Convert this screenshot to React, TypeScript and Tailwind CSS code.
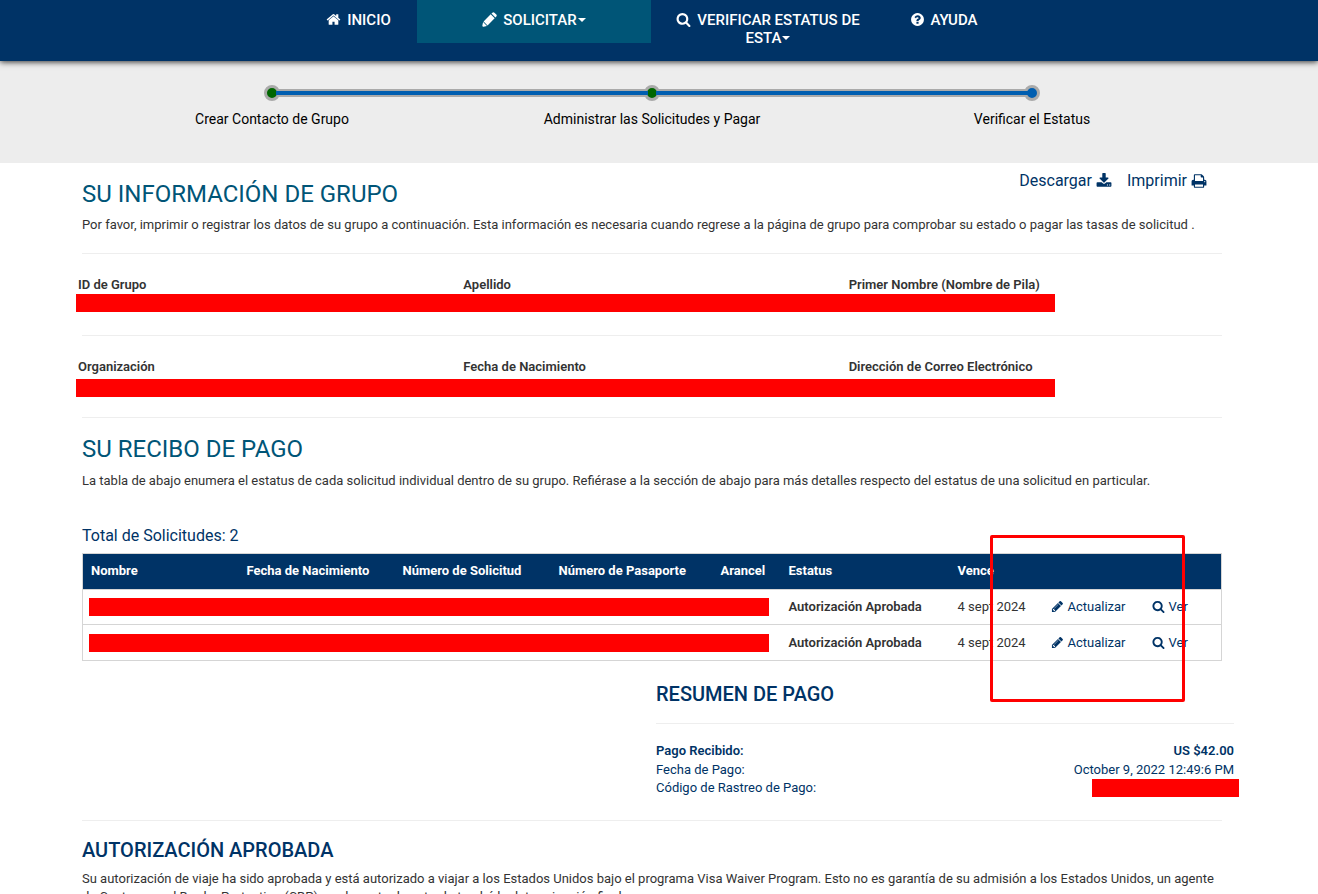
import type { ReactNode } from "react";

const ICONS = {
  home: "M1472 992v480q0 26-19 45t-45 19h-384v-384h-256v384h-384q-26 0-45-19t-19-45v-480q0-1 .5-3t.5-3l575-474 575 474q1 2 1 6zm223-69l-62 74q-8 9-21 11h-3q-13 0-21-7l-692-577-692 577q-12 8-24 7-13-2-21-11l-62-74q-8-10-7-23.5t11-21.5l719-599q32-26 76-26t76 26l244 204v-195q0-14 9-23t23-9h192q14 0 23 9t9 23v408l219 182q10 8 11 21.5t-7 23.5z",
  pencil:
    "M491 1536l91-91-235-235-91 91v107h128v128h107zm523-928q0-22-22-22-10 0-17 7l-542 542q-7 7-7 17 0 22 22 22 10 0 17-7l542-542q7-7 7-17zm-54-192l416 416-832 832h-416v-416zm683 96q0 53-37 90l-166 166-416-416 166-165q36-38 90-38 53 0 91 38l235 234q37 39 37 91z",
  pencilSolid:
    "M1130 190l110-110q50-50 120-50t120 50l232 232q50 50 50 120t-50 120l-110 110zM1040 280l472 472-850 850-472-472zM130 1200l462 462-400 100q-60 10-110-40t-40-110z",
  search:
    "M1216 832q0-185-131.5-316.5t-316.5-131.5-316.5 131.5-131.5 316.5 131.5 316.5 316.5 131.5 316.5-131.5 131.5-316.5zm512 832q0 52-38 90t-90 38q-54 0-90-38l-343-342q-179 124-399 124-143 0-273.5-55.5t-225-150-150-225-55.5-273.5 55.5-273.5 150-225 225-150 273.5-55.5 273.5 55.5 225 150 150 225 55.5 273.5q0 220-124 399l343 343q37 37 37 90z",
  help: "M1024 1376v-192q0-14-9-23t-23-9h-192q-14 0-23 9t-9 23v192q0 14 9 23t23 9h192q14 0 23-9t9-23zm256-672q0-88-55.5-163t-138.5-116-170-41q-243 0-371 213-15 24 8 42l132 100q7 6 19 6 16 0 25-12 53-68 86-92 34-24 86-24 48 0 85.5 26t37.5 59q0 38-20 61t-68 45q-63 28-115.5 86.5t-52.5 125.5v36q0 14 9 23t23 9h192q14 0 23-9t9-23q0-19 21.5-49.5t54.5-49.5q32-18 49-28.5t46-35 44.5-48 28-60.5 12.5-81zm384 192q0 209-103 385.5t-279.5 279.5-385.5 103-385.5-103-279.5-279.5-103-385.5 103-385.5 279.5-279.5 385.5-103 385.5 103 279.5 279.5 103 385.5z",
  download:
    "M1344 1344q0-26-19-45t-45-19-45 19-19 45 19 45 45 19 45-19 19-45zm256 0q0-26-19-45t-45-19-45 19-19 45 19 45 45 19 45-19 19-45zm128-224v320q0 40-28 68t-68 28h-1472q-40 0-68-28t-28-68v-320q0-40 28-68t68-28h465l135 136q58 56 136 56t136-56l136-136h464q40 0 68 28t28 68zm-325-569q17 41-14 70l-448 448q-18 19-45 19t-45-19l-448-448q-31-29-14-70 17-39 59-39h256v-448q0-26 19-45t45-19h256q26 0 45 19t19 45v448h256q42 0 59 39z",
  print:
    "M448 1536h896v-256h-896v256zm0-640h896v-384h-160q-40 0-68-28t-28-68v-160h-640v640zm1152 64q0-26-19-45t-45-19-45 19-19 45 19 45 45 19 45-19 19-45zm128 0v416q0 13-9.5 22.5t-22.5 9.5h-224v160q0 40-28 68t-68 28h-960q-40 0-68-28t-28-68v-160h-224q-13 0-22.5-9.5t-9.5-22.5v-416q0-79 56.5-135.5t135.5-56.5h64v-544q0-40 28-68t68-28h672q40 0 88 20t76 48l152 152q28 28 48 76t20 88v256h64q79 0 135.5 56.5t56.5 135.5z",
};

function Icon({ name, className }: { name: keyof typeof ICONS; className: string }) {
  return (
    <svg viewBox="0 0 1792 1792" fill="currentColor" aria-hidden="true" className={className}>
      <path d={ICONS[name]} />
    </svg>
  );
}

function Caret() {
  return (
    <svg viewBox="0 0 8 4" fill="currentColor" aria-hidden="true" className="ml-px inline h-1 w-2 align-[3px]">
      <path d="M0 0h8L4 4z" />
    </svg>
  );
}

function NavItem({ icon, className, children }: { icon: keyof typeof ICONS; className: string; children: ReactNode }) {
  return (
    <a href="#" className={`px-[15px] pt-[11px] pb-[14px] text-center ${className}`}>
      <Icon name={icon} className="mr-1.5 inline size-[15px] align-[-2px]" />
      {children}
    </a>
  );
}

function Header() {
  return (
    <header className="relative bg-[#003366] pr-4 text-white shadow-[0_1px_6px_rgba(0,0,0,0.8)]">
      <nav className="mx-auto flex w-full max-w-[702px] items-start text-[15px] leading-[18px] font-medium">
        <NavItem icon="home" className="w-1/6 whitespace-nowrap">INICIO</NavItem>
        <NavItem icon="pencilSolid" className="w-1/3 bg-[#005577]">
          SOLICITAR
          <Caret />
        </NavItem>
        <NavItem icon="search" className="w-1/3">
          VERIFICAR ESTATUS DE ESTA
          <Caret />
        </NavItem>
        <NavItem icon="help" className="w-1/6 whitespace-nowrap">AYUDA</NavItem>
      </nav>
    </header>
  );
}

const STEPS = [
  { label: "Crear Contacto de Grupo", dot: "bg-[#006600]", before: false, after: true },
  { label: "Administrar las Solicitudes y Pagar", dot: "bg-[#006600]", before: true, after: true },
  { label: "Verificar el Estatus", dot: "bg-[#005eb0]", before: true, after: false },
];

function Track({ shown }: { shown: boolean }) {
  return (
    <span className={`relative z-10 h-2 flex-1 py-0.5 ${shown ? "bg-[#aaaaaa]" : ""}`}>
      {shown && <span className="-mx-0.5 block h-1 bg-[#005eb0]" />}
    </span>
  );
}

function Stepper() {
  return (
    <section className="bg-[#ededed] pr-[14px]">
      <ol className="mx-auto grid max-w-[1140px] grid-cols-3 pt-6 pb-[35px]">
        {STEPS.map((step) => (
          <li key={step.label} className="text-center text-[14px] leading-[18px] text-black">
            <div className="mb-[9px] flex items-center">
              <Track shown={step.before} />
              <span className={`-mx-0.5 size-4 rounded-full border-3 border-[#aaaaaa] ${step.dot}`} />
              <Track shown={step.after} />
            </div>
            {step.label}
          </li>
        ))}
      </ol>
    </section>
  );
}

function Fields({ labels, barClass }: { labels: string[]; barClass: string }) {
  return (
    <div className="-mr-3 -ml-1 pt-[22px]">
      <div className="grid grid-cols-3 font-semibold">
        {labels.map((label) => (
          <div key={label}>{label}</div>
        ))}
      </div>
      <div className={`-ml-0.5 h-[18px] w-[979px] max-w-full bg-[#ff0000] ${barClass}`} />
    </div>
  );
}

function Applications() {
  return (
    <div className="relative">
      <table className="w-full table-fixed border-collapse border border-[#d5d5d5] text-left">
        <colgroup>
          <col className="w-[156px]" />
          <col className="w-[156px]" />
          <col className="w-[156px]" />
          <col className="w-[162px]" />
          <col className="w-[68px]" />
          <col className="w-[169px]" />
          <col className="w-[93px]" />
          <col className="w-[101px]" />
          <col />
        </colgroup>
        <thead>
          <tr className="h-[36px] bg-[#003366] text-white">
            {["Nombre", "Fecha de Nacimiento", "Número de Solicitud", "Número de Pasaporte", "Arancel", "Estatus", "Vence", "", ""].map(
              (title, i) => (
                <th key={i} className="px-2 pb-0.5 font-bold whitespace-nowrap">
                  {title}
                </th>
              ),
            )}
          </tr>
        </thead>
        <tbody>
          {[1, 2].map((row) => (
            <tr key={row} className="h-[35px] border-t border-[#d5d5d5] last:h-[36px]">
              <td colSpan={5} className="pr-3 pl-1.5">
                <div className="h-[18px] bg-[#ff0000]" />
              </td>
              <td className="px-2 font-semibold whitespace-nowrap">Autorización Aprobada</td>
              <td className="px-2 whitespace-nowrap">4 sept 2024</td>
              <td className="px-2 whitespace-nowrap">
                <a href="#" className="text-[#003366]">
                  <Icon name="pencil" className="mr-1 inline size-[13px] align-[-2px]" />
                  Actualizar
                </a>
              </td>
              <td className="px-2 whitespace-nowrap">
                <a href="#" className="text-[#003366]">
                  <Icon name="search" className="mr-1 inline size-[13px] align-[-2px]" />
                  Ver
                </a>
              </td>
            </tr>
          ))}
        </tbody>
      </table>
      <div className="pointer-events-none absolute -top-[18px] right-[37px] h-[167px] w-[195px] rounded-xs border-3 border-[#ff0000]" />
    </div>
  );
}

function Summary() {
  return (
    <section className="-mr-3 ml-auto w-[578px] pt-[21px] text-[#003366]">
      <h3 className="text-[20px] leading-6 font-medium">RESUMEN DE PAGO</h3>
      <hr className="mt-[17px] mb-[18px] border-[#eeeeee]" />
      <dl>
        <div className="mb-px flex justify-between font-semibold">
          <dt>Pago Recibido:</dt>
          <dd>US $42.00</dd>
        </div>
        <div className="flex justify-between">
          <dt>Fecha de Pago:</dt>
          <dd>October 9, 2022 12:49:6 PM</dd>
        </div>
        <div className="flex justify-between">
          <dt>Código de Rastreo de Pago:</dt>
          <dd className="-mr-[5px] h-[18px] w-[147px] bg-[#ff0000]" />
        </div>
      </dl>
    </section>
  );
}

export default function App() {
  return (
    <div className="min-h-screen bg-white font-['Roboto',sans-serif] text-[13px] leading-[18px] text-[#333333]">
      <Header />
      <Stepper />
      <div className="pr-[14px]">
        <main className="mx-auto max-w-[1140px]">
          <div className="flex items-start justify-between pt-[9px] pr-[15px]">
            <h2 className="pt-2 text-[24px] leading-7 text-[#005577]">SU INFORMACIÓN DE GRUPO</h2>
            <div className="flex gap-[15px] text-[16px] leading-[18px] text-[#003366]">
              <a href="#" className="flex items-center gap-1">
                Descargar
                <Icon name="download" className="size-4" />
              </a>
              <a href="#" className="flex items-center gap-1">
                Imprimir
                <Icon name="print" className="size-4" />
              </a>
            </div>
          </div>
          <p className="mt-2">
            Por favor, imprimir o registrar los datos de su grupo a continuación. Esta información es necesaria cuando
            regrese a la página de grupo para comprobar su estado o pagar las tasas de solicitud .
          </p>
          <hr className="mt-[19px] border-[#eeeeee]" />
          <Fields labels={["ID de Grupo", "Apellido", "Primer Nombre (Nombre de Pila)"]} barClass="mb-[23px]" />
          <hr className="border-[#eeeeee]" />
          <Fields
            labels={["Organización", "Fecha de Nacimiento", "Dirección de Correo Electrónico"]}
            barClass="mt-[3px] mb-5"
          />
          <hr className="border-[#eeeeee]" />
          <h2 className="mt-[17px] text-[24px] leading-7 text-[#005577]">SU RECIBO DE PAGO</h2>
          <p className="mt-[9px]">
            La tabla de abajo enumera el estatus de cada solicitud individual dentro de su grupo. Refiérase a la sección
            de abajo para más detalles respecto del estatus de una solicitud en particular.
          </p>
          <h4 className="mt-[37px] mb-2 text-[16px] leading-[18px] text-[#003366]">Total de Solicitudes: 2</h4>
          <Applications />
          <Summary />
          <hr className="mt-[23px] border-[#eeeeee]" />
          <h3 className="mt-[17px] text-[20px] leading-6 font-medium text-[#003366]">AUTORIZACIÓN APROBADA</h3>
          <p className="mt-2">
            Su autorización de viaje ha sido aprobada y está autorizado a viajar a los Estados Unidos bajo el programa
            Visa Waiver Program. Esto no es garantía de su admisión a los Estados Unidos, un agente de Customs and Border
            Protection (CBP) en el puerto de entrada tendrá la determinación final.
          </p>
        </main>
      </div>
    </div>
  );
}
